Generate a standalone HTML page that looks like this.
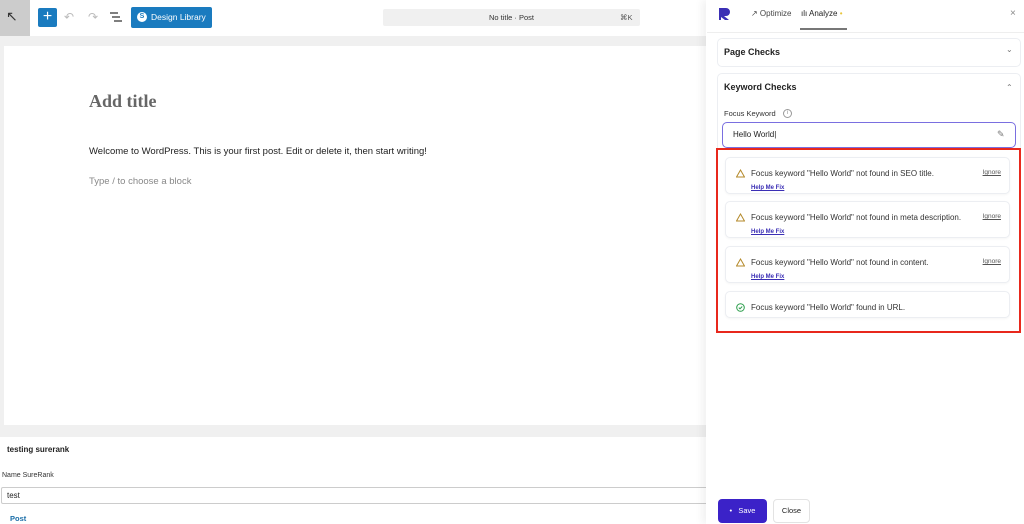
<!DOCTYPE html>
<html><head><style>
*{box-sizing:border-box;margin:0;padding:0}
body{width:1024px;height:524px;overflow:hidden;background:#fff;font-family:"Liberation Sans",sans-serif;position:relative;color:#1e1e1e}
.abs{position:absolute}
.card{position:absolute;left:725px;width:285px;background:#fff;border:1px solid #eceef2;border-radius:5px;box-shadow:0 1px 2px rgba(0,0,0,.04)}
.card .t{position:absolute;left:25px;top:11px;font-size:8px;color:#333}
.card .h{position:absolute;left:25px;top:27px;font-size:6px;font-weight:bold;color:#3b2fb5;text-decoration:underline}
.card .ig{position:absolute;right:8px;top:11px;font-size:6.5px;color:#555;text-decoration:underline}
.card svg{position:absolute;left:10px;top:11px}
</style></head><body>
<!-- top bar -->
<div class="abs" style="left:0;top:0;width:30px;height:36px;background:#ccc"></div>
<div class="abs" style="left:6px;top:8px;font-size:14px;color:#333">↖</div>
<div class="abs" style="left:38px;top:8px;width:19px;height:19px;background:#1a7bbf;border-radius:2px;color:#fff;font-size:16px;line-height:18px;text-align:center">+</div>
<div class="abs" style="left:64px;top:10px;font-size:12px;color:#bbb">↶</div>
<div class="abs" style="left:88px;top:10px;font-size:12px;color:#bbb">↷</div>
<svg class="abs" style="left:110px;top:12px" width="12" height="10"><path d="M0 1h8M2 5h8M4 9h8" stroke="#333" stroke-width="1.3"/></svg>
<div class="abs" style="left:131px;top:7px;width:81px;height:21px;background:#1a7bbf;border-radius:2px;color:#fff;font-size:8.5px;line-height:21px;padding-left:20px">Design Library</div>
<div class="abs" style="left:137px;top:12px;width:10px;height:10px;border-radius:50%;background:#fff;color:#1a7bbf;font-size:7px;line-height:10px;text-align:center;font-weight:bold">S</div>
<div class="abs" style="left:383px;top:9px;width:257px;height:17px;background:#f0f0f0;border-radius:2px;font-size:7.5px;line-height:17px;text-align:center;color:#333">No title · Post</div>
<div class="abs" style="left:620px;top:9px;font-size:7.5px;line-height:17px;color:#555">⌘K</div>
<!-- editor -->
<div class="abs" style="left:0;top:36px;width:708px;height:401px;background:#f0f0f0"></div>
<div class="abs" style="left:4px;top:46px;width:704px;height:379px;background:#fff"></div>
<div class="abs" style="left:89px;top:91px;font-family:'Liberation Serif',serif;font-size:18px;font-weight:bold;color:#666">Add title</div>
<div class="abs" style="left:89px;top:146px;font-size:9.5px;color:#1e1e1e">Welcome to WordPress. This is your first post. Edit or delete it, then start writing!</div>
<div class="abs" style="left:89px;top:176px;font-size:9.5px;color:#888">Type / to choose a block</div>
<!-- bottom meta -->
<div class="abs" style="left:7px;top:445px;font-size:8px;font-weight:bold;color:#222">testing surerank</div>
<div class="abs" style="left:2px;top:472px;font-size:7px;color:#333">Name SureRank</div>
<div class="abs" style="left:1px;top:487px;width:710px;height:17px;border:1px solid #ccc;border-radius:2px;font-size:8px;line-height:15px;padding-left:5px">test</div>
<div class="abs" style="left:10px;top:514px;font-size:7.5px;color:#1a6ea8;font-weight:bold">Post</div>
<!-- sidebar -->
<div class="abs" style="left:706px;top:0;width:318px;height:524px;background:#fff;box-shadow:-4px 0 8px rgba(0,0,0,.06)"></div>
<svg class="abs" style="left:718px;top:7px" width="13" height="13"><path d="M1 1h7a4 4 0 0 1 0 8H6l5 4H7L3 10v3H1z" fill="#3b2fb5"/></svg>
<div class="abs" style="left:751px;top:9px;font-size:8px;color:#444">↗ Optimize</div>
<div class="abs" style="left:801px;top:9px;font-size:8px;color:#222">ılı Analyze <span style="color:#e8c53a">•</span></div>
<div class="abs" style="left:800px;top:28px;width:47px;height:1.5px;background:#777"></div>
<div class="abs" style="left:1010px;top:8px;font-size:10px;color:#888">×</div>
<div class="abs" style="left:707px;top:32px;width:317px;height:1px;background:#eee"></div>
<div class="abs" style="left:717px;top:38px;width:304px;height:29px;border:1px solid #eceef2;border-radius:5px"></div>
<div class="abs" style="left:724px;top:47px;font-size:9px;font-weight:bold;color:#222">Page Checks</div>
<div class="abs" style="left:1006px;top:45px;font-size:8px;color:#777">⌄</div>
<div class="abs" style="left:717px;top:73px;width:304px;height:260px;border:1px solid #eceef2;border-radius:5px"></div>
<div class="abs" style="left:724px;top:82px;font-size:9px;font-weight:bold;color:#222">Keyword Checks</div>
<div class="abs" style="left:1006px;top:83px;font-size:8px;color:#777">⌃</div>
<div class="abs" style="left:724px;top:109px;font-size:7.5px;color:#333">Focus Keyword</div>
<div class="abs" style="left:783px;top:109px;width:9px;height:9px;border:1px solid #999;border-radius:50%;font-size:5px;text-align:center;line-height:7px;color:#777">i</div>
<div class="abs" style="left:722px;top:122px;width:294px;height:26px;border:1.5px solid #7a6fe0;border-radius:5px;font-size:8px;line-height:23px;padding-left:10px;color:#222">Hello World|</div>
<div class="abs" style="left:997px;top:129px;font-size:9px;color:#777">✎</div>
<div class="abs" style="left:716px;top:148px;width:305px;height:185px;border:2.5px solid #e8281c"></div>
<div class="card" style="top:157px;height:37px"><svg width="9" height="9"><path d="M4.5 1L8.5 8h-8z" fill="none" stroke="#b4892a" stroke-width="1"/></svg><div class="t">Focus keyword "Hello World" not found in SEO title.</div><div class="h">Help Me Fix</div><div class="ig">Ignore</div></div>
<div class="card" style="top:201px;height:37px"><svg width="9" height="9"><path d="M4.5 1L8.5 8h-8z" fill="none" stroke="#b4892a" stroke-width="1"/></svg><div class="t">Focus keyword "Hello World" not found in meta description.</div><div class="h">Help Me Fix</div><div class="ig">Ignore</div></div>
<div class="card" style="top:246px;height:37px"><svg width="9" height="9"><path d="M4.5 1L8.5 8h-8z" fill="none" stroke="#b4892a" stroke-width="1"/></svg><div class="t">Focus keyword "Hello World" not found in content.</div><div class="h">Help Me Fix</div><div class="ig">Ignore</div></div>
<div class="card" style="top:291px;height:27px"><svg width="9" height="9"><circle cx="4.5" cy="4.5" r="3.8" fill="none" stroke="#2a9d4a"/><path d="M2.8 4.6l1.2 1.2 2.2-2.3" fill="none" stroke="#2a9d4a"/></svg><div class="t">Focus keyword "Hello World" found in URL.</div></div>
<div class="abs" style="left:718px;top:499px;width:49px;height:24px;background:#3b22c8;border-radius:4px;color:#fff;font-size:7.5px;line-height:24px;text-align:center">•&nbsp;&nbsp; Save</div>
<div class="abs" style="left:773px;top:499px;width:37px;height:24px;border:1px solid #e3e3e3;border-radius:4px;font-size:7.5px;line-height:22px;text-align:center;color:#222">Close</div>
</body></html>
